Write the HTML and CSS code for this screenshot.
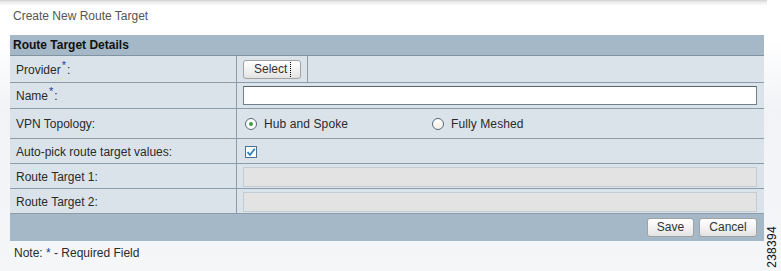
FILE: index.html
```html
<!DOCTYPE html>
<html lang="en">
<head>
    <meta charset="UTF-8">
    <title>Create New Route Target</title>
    <link rel="stylesheet" href="styles.css">
</head>
<body>
<div class="page">
    <div class="title">Create New Route Target</div>

    <div class="panel">
        <div class="panel-head">Route Target Details</div>

        <div class="row row-provider">
            <div class="label">Provider<sup class="req">*</sup>:</div>
            <div class="value">
                <div class="select-cell">
                    <button class="btn btn-select"><span class="focus">Select</span></button>
                </div>
            </div>
        </div>

        <div class="row row-name">
            <div class="label">Name<sup class="req">*</sup>:</div>
            <div class="value"><input class="field" type="text"></div>
        </div>

        <div class="row row-topo">
            <div class="label">VPN Topology:</div>
            <div class="value">
                <span class="opt"><span class="radio on"></span>Hub and Spoke</span>
                <span class="opt"><span class="radio"></span>Fully Meshed</span>
            </div>
        </div>

        <div class="row row-auto">
            <div class="label">Auto-pick route target values:</div>
            <div class="value">
                <span class="check">
                    <svg width="10" height="10" viewBox="0 0 10 10"><path d="M1.5 5.2 L4 7.8 L8.8 1.8" fill="none" stroke="#2d7fc0" stroke-width="1.8"/></svg>
                </span>
            </div>
        </div>

        <div class="row row-rt">
            <div class="label">Route Target 1:</div>
            <div class="value"><input class="field" type="text" disabled></div>
        </div>

        <div class="row row-rt">
            <div class="label">Route Target 2:</div>
            <div class="value"><input class="field" type="text" disabled></div>
        </div>

        <div class="panel-foot">
            <button class="btn btn-save">Save</button>
            <button class="btn btn-cancel">Cancel</button>
        </div>
    </div>

    <div class="note">Note: <span class="req-note">*</span> - Required Field</div>

    <div class="figno">238394</div>
</div>
</body>
</html>
```

FILE: styles.css
```css
* {
    padding: 0;
    margin: 0;
    box-sizing: border-box;
}

body {
    width: 781px;
    height: 271px;
    overflow: hidden;
    font-family: "Liberation Sans", Arial, sans-serif;
    font-size: 12px;
    color: #2a2a2a;
    background: linear-gradient(#fff 0, #fff 40px, #f1f3f6 110px, #f4f6f8 100%);
}

.page {
    position: relative;
    height: 271px;
    padding-left: 10px;
    background: linear-gradient(#cfcfcf 0, #ececec 2px, rgba(255,255,255,0) 6px) no-repeat;
    background-size: 767px 6px;
}

.title {
    height: 35px;
    padding: 9px 0 0 3px;
    color: #555;
    font-size: 12px;
}

.panel {
    width: 754px;
    background: #dbe3ea;
}

.panel-head {
    height: 21px;
    padding: 3px 0 0 3px;
    background: #a4b8c8;
    border-bottom: 1px solid #7f93a3;
    font-weight: bold;
    color: #111;
}

.row {
    display: grid;
    grid-template-columns: 227px 1fr;
    border-bottom: 1px solid #8c9caa;
}

.row-provider { height: 27px; }
.row-name { height: 26px; }
.row-topo { height: 30px; }
.row-auto { height: 25px; }
.row-rt { height: 25px; }

.label {
    display: flex;
    align-items: center;
    padding: 1px 0 0 6px;
    border-right: 1px solid #8c9caa;
    color: #2a2a2a;
}

.value {
    display: flex;
    align-items: center;
    padding: 0 7px 0 6px;
}

.req {
    color: #23399a;
    font-size: 11px;
    line-height: 0;
    position: relative;
    top: -5px;
    margin: 0 1px 0 1px;
}

.select-cell {
    height: 100%;
    width: 71px;
    margin-left: -6px;
    padding: 4px 0 0 6px;
    border-right: 1px solid #8c9caa;
}

.btn {
    height: 19px;
    border: 1px solid #a2a2a2;
    border-radius: 3px;
    background: linear-gradient(#ffffff, #f2f2f2 55%, #e2e2e2);
    font-family: "Liberation Sans", Arial, sans-serif;
    font-size: 12px;
    color: #333;
    line-height: 15px;
    cursor: pointer;
}

.btn-select {
    width: 58px;
    padding: 0 8px 0 10px;
    text-align: left;
}

.focus {
    display: inline-block;
    padding-right: 3px;
    border-right: 1px dotted #000;
    line-height: 15px;
}

.field {
    width: 100%;
    height: 19px;
    border: 1px solid #6f7f8b;
    border-top-color: #55646f;
    background: #fff;
    font-family: "Liberation Sans", Arial, sans-serif;
    font-size: 12px;
}

.row-rt .value {
    padding-top: 1px;
}

.field:disabled {
    height: 20px;
    border: 1px solid #c3ccd2;
    background: #e3e3e3;
}

.opt {
    display: inline-flex;
    align-items: center;
    width: 185px;
    margin-left: 2px;
    color: #2a2a2a;
    font-size: 12px;
    letter-spacing: 0.1px;
}

.radio {
    width: 12px;
    height: 12px;
    margin-right: 7px;
    border: 1px solid #55687a;
    border-radius: 50%;
    background: radial-gradient(circle at 50% 70%, #f7f0e4, #fff 70%);
    position: relative;
}

.radio.on {
    background: #fff;
}

.radio.on::after {
    content: "";
    position: absolute;
    left: 3px;
    top: 3px;
    width: 4px;
    height: 4px;
    border-radius: 50%;
    background: #3aa040;
}

.check {
    display: flex;
    align-items: center;
    justify-content: center;
    width: 12px;
    height: 12px;
    margin-left: 2px;
    margin-top: 2px;
    border: 1px solid #4f6f8f;
    background: #fff;
}

.panel-foot {
    display: flex;
    justify-content: flex-end;
    gap: 5px;
    height: 27px;
    padding: 4px 7px 0 0;
    background: #a4b8c8;
}

.btn-save {
    width: 47px;
}

.btn-cancel {
    width: 58px;
}

.note {
    padding: 5px 0 0 4px;
    color: #2a2a2a;
}

.req-note {
    color: #23399a;
}

.figno {
    position: absolute;
    right: 2px;
    top: 226px;
    writing-mode: vertical-rl;
    transform: rotate(180deg);
    font-size: 12px;
    line-height: 13px;
    color: #111;
    letter-spacing: 0.3px;
}
```
